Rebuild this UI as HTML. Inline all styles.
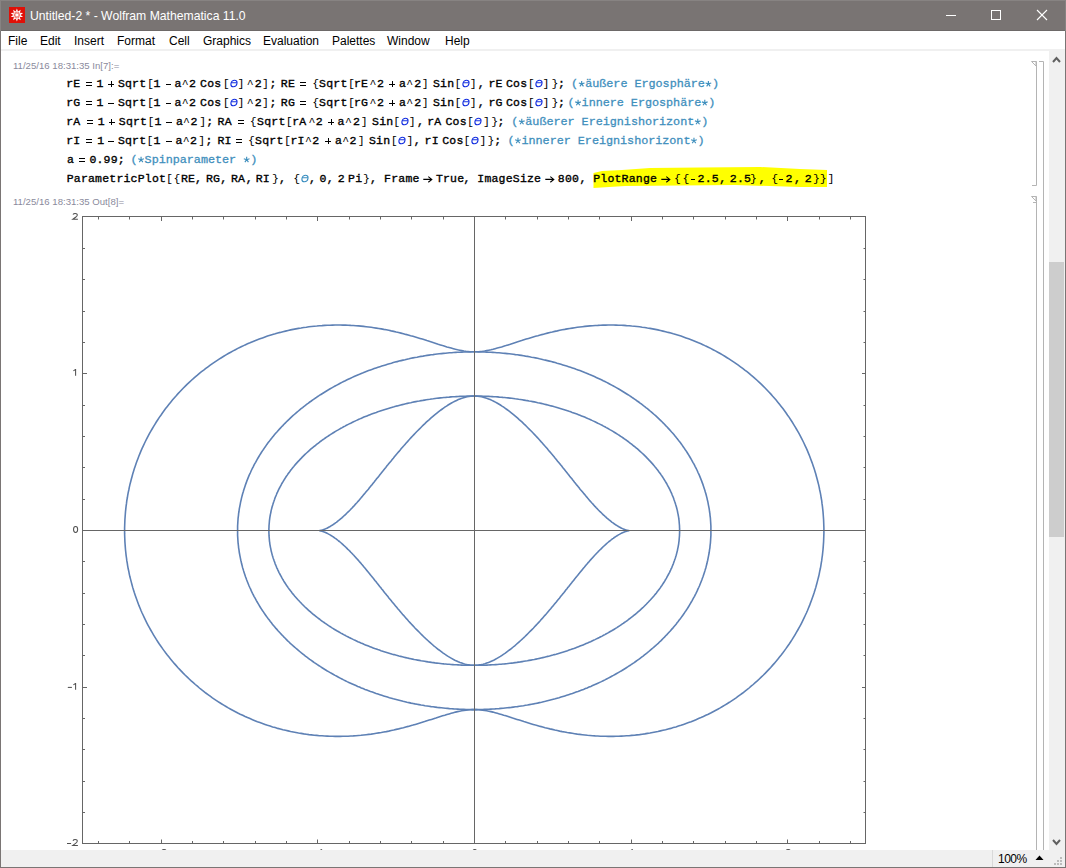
<!DOCTYPE html>
<html><head><meta charset="utf-8">
<style>
*{margin:0;padding:0;box-sizing:border-box}
html,body{width:1066px;height:868px;overflow:hidden;background:#fff;position:relative;font-family:"Liberation Sans",sans-serif}
.a{position:absolute;white-space:pre}
#title{left:0;top:0;width:1066px;height:31px;background:#797473}
#ttxt{left:30px;top:9px;font-size:12.2px;color:#fff;line-height:14px}
.menu{top:34px;font-size:12px;color:#000;line-height:14px}
.lbl{font-size:9.6px;color:#8a8a9c;line-height:10px}
b.op{position:absolute;height:1px;background:#000}
svg.th{position:absolute}
i.kt{position:absolute;white-space:pre;font-style:normal;line-height:14px;font-family:"Liberation Mono",monospace;font-size:11.5px;color:#000}
i.k,i.m,i.t,i.tl,i.ar{position:absolute;white-space:pre;font-style:normal;line-height:14px}
i.k{font-family:"Liberation Mono",monospace;font-size:11.5px;letter-spacing:0.2px;color:#000;-webkit-text-stroke:0.35px #000}
i.m{font-family:"Liberation Mono",monospace;font-size:11.8px;letter-spacing:-0.04px;color:#3f8fbd;-webkit-text-stroke:0.3px #3f8fbd}
i.t{font-family:"Liberation Sans",sans-serif;font-style:italic;font-size:11.5px;color:#2030d8}
i.tl{font-family:"Liberation Sans",sans-serif;font-style:italic;font-size:11.5px;color:#3c90c0}
i.ar{font-family:"Liberation Sans",sans-serif;font-size:11px;color:#000}
.code{font-family:"Liberation Mono",monospace;font-weight:bold;font-size:11px;color:#000;line-height:14px;letter-spacing:0px}
.cm{color:#4a98ba}
.th{color:#2a4fd0;font-style:italic}
.tick{font-size:9.5px;color:#444;line-height:10px}
</style></head><body>
<div id="title" class="a"></div>
<div class="a" style="left:0;top:0;width:1066px;height:1px;background:#878382"></div>
<div class="a" style="left:0;top:30px;width:1066px;height:1px;background:#6d6968"></div>
<div class="a" style="left:0;top:0;width:1px;height:31px;background:#878382"></div>
<div class="a" style="left:1065px;top:0;width:1px;height:31px;background:#878382"></div>
<svg class="a" style="left:9px;top:7px" width="16" height="16" viewBox="0 0 16 16">
<rect width="16" height="16" fill="#e01008"/>
<polygon fill="#fff" points="7.90,1.40 9.04,4.38 11.72,2.64 10.89,5.73 14.08,5.89 11.60,7.90 14.08,9.91 10.89,10.07 11.72,13.16 9.04,11.42 7.90,14.40 6.76,11.42 4.08,13.16 4.91,10.07 1.72,9.91 4.20,7.90 1.72,5.89 4.91,5.73 4.08,2.64 6.76,4.38"/>
<polygon fill="none" stroke="#ec6a5c" stroke-width="0.8" points="7.90,4.60 8.39,6.48 9.90,5.25 9.19,7.06 11.13,6.95 9.50,8.00 11.13,9.05 9.19,8.94 9.90,10.75 8.39,9.52 7.90,11.40 7.41,9.52 5.90,10.75 6.61,8.94 4.67,9.05 6.30,8.00 4.67,6.95 6.61,7.06 5.90,5.25 7.41,6.48"/>
</svg>
<div id="ttxt" class="a">Untitled-2 * - Wolfram Mathematica 11.0</div>
<svg class="a" style="left:940px;top:8px" width="120" height="16">
<line x1="6" y1="7.5" x2="16" y2="7.5" stroke="#fff" stroke-width="1"/>
<rect x="51.5" y="2.5" width="9" height="9" fill="none" stroke="#fff" stroke-width="1"/>
<line x1="97" y1="2" x2="107" y2="12" stroke="#fff" stroke-width="1.1"/>
<line x1="107" y1="2" x2="97" y2="12" stroke="#fff" stroke-width="1.1"/>
</svg>
<!-- window borders -->
<div class="a" style="left:0;top:31px;width:1px;height:837px;background:#7a7574"></div>
<div class="a" style="left:1065px;top:31px;width:1px;height:837px;background:#7a7574"></div>
<div class="a" style="left:0;top:867px;width:1066px;height:1px;background:#7a7574"></div>
<!-- menu -->
<div class="a menu" style="left:8px">File</div>
<div class="a menu" style="left:40px">Edit</div>
<div class="a menu" style="left:74px">Insert</div>
<div class="a menu" style="left:117px">Format</div>
<div class="a menu" style="left:169px">Cell</div>
<div class="a menu" style="left:203px">Graphics</div>
<div class="a menu" style="left:263px">Evaluation</div>
<div class="a menu" style="left:332px">Palettes</div>
<div class="a menu" style="left:387px">Window</div>
<div class="a menu" style="left:445px">Help</div>
<div class="a" style="left:1px;top:49px;width:1064px;height:2px;background:#f0f0f0"></div>
<!-- scrollbar -->
<div class="a" style="left:1049px;top:51px;width:16px;height:799px;background:#f0f0f0"></div>
<div class="a" style="left:1049px;top:262px;width:15px;height:275px;background:#cdcdcd"></div>
<svg class="a" style="left:1049px;top:51px" width="16" height="16"><polyline points="4,11 7.5,7 11,11" fill="none" stroke="#606060" stroke-width="2"/></svg>
<svg class="a" style="left:1049px;top:834px" width="16" height="16"><polyline points="4,6 7.5,10 11,6" fill="none" stroke="#606060" stroke-width="2"/></svg>
<!-- cell brackets -->
<svg class="a" style="left:1028px;top:55px" width="20" height="795">
<g stroke="#b4b4b4" stroke-width="1" fill="none">
<polyline points="4,6.5 8.5,6.5 8.5,130.5 4,130.5"/>
<polygon points="3.5,6.5 8,6.5 8,11" fill="#fff"/>
<polyline points="4,141.5 8.5,141.5 8.5,795"/>
<polygon points="3.5,141.5 8,141.5 8,146" fill="#fff"/>
<line x1="5" y1="147.5" x2="8.5" y2="147.5"/>
<polyline points="11,6.5 15.5,6.5 15.5,795"/>
</g></svg>
<!-- labels -->
<div class="a lbl" style="left:13px;top:61px">11/25/16 18:31:35 In[7]:=</div>
<div class="a lbl" style="left:13px;top:197px">11/25/16 18:31:35 Out[8]=</div>
<!-- code -->
<svg class="a" style="left:0;top:0" width="900" height="200"><polygon fill="#ffff00" points="593.5,173 602,171 622,170 650,168 700,167.5 760,167 800,169 827,170 827,187 800,187 735,185 625,186 593.5,188"/></svg>
<i class="k" style="left:66.2px;top:76.9px">rE</i>
<b class="op" style="left:85.9px;top:82.4px;width:6px"></b><b class="op" style="left:85.9px;top:85.4px;width:6px"></b>
<i class="k" style="left:96.4px;top:76.9px">1</i>
<b class="op" style="left:108.0px;top:84.1px;width:6px"></b><b class="op" style="left:110.5px;top:81.0px;width:1px;height:6px"></b>
<i class="k" style="left:117.9px;top:76.9px">Sqrt</i>
<i class="kt" style="left:146.9px;top:76.9px">[</i>
<i class="k" style="left:153.4px;top:76.9px">1</i>
<b class="op" style="left:165.5px;top:84.3px;width:5.7px"></b>
<i class="k" style="left:174.6px;top:76.9px">a</i>
<i class="kt" style="left:181.7px;top:76.9px">^</i>
<i class="k" style="left:189.1px;top:76.9px">2</i>
<i class="k" style="left:200.1px;top:76.9px">Cos</i>
<i class="kt" style="left:222.7px;top:76.9px">[</i>
<svg class="th" style="left:230.2px;top:79.0px" width="9" height="9"><g transform="skewX(-8)" fill="none" stroke="#1530e0" stroke-width="1.1"><ellipse cx="4.6" cy="4.5" rx="3" ry="3.2"/><line x1="1.8" y1="3.7" x2="7.4" y2="3.7"/></g></svg>
<i class="kt" style="left:237.6px;top:76.9px">]</i>
<i class="kt" style="left:246.8px;top:76.9px">^</i>
<i class="k" style="left:254.7px;top:76.9px">2</i>
<i class="kt" style="left:262.0px;top:76.9px">]</i>
<i class="k" style="left:269.4px;top:76.9px">;</i>
<i class="k" style="left:280.8px;top:76.9px">RE</i>
<b class="op" style="left:300.0px;top:82.4px;width:6px"></b><b class="op" style="left:300.0px;top:85.4px;width:6px"></b>
<i class="kt" style="left:312.3px;top:76.9px">{</i>
<i class="k" style="left:319.1px;top:76.9px">Sqrt</i>
<i class="kt" style="left:347.9px;top:76.9px">[</i>
<i class="k" style="left:353.9px;top:76.9px">rE</i>
<i class="kt" style="left:369.6px;top:76.9px">^</i>
<i class="k" style="left:377.1px;top:76.9px">2</i>
<b class="op" style="left:389.1px;top:84.1px;width:6px"></b><b class="op" style="left:391.6px;top:81.0px;width:1px;height:6px"></b>
<i class="k" style="left:398.9px;top:76.9px">a</i>
<i class="kt" style="left:406.3px;top:76.9px">^</i>
<i class="k" style="left:414.2px;top:76.9px">2</i>
<i class="kt" style="left:421.7px;top:76.9px">]</i>
<i class="k" style="left:433.0px;top:76.9px">Sin</i>
<i class="kt" style="left:454.4px;top:76.9px">[</i>
<svg class="th" style="left:461.9px;top:79.0px" width="9" height="9"><g transform="skewX(-8)" fill="none" stroke="#1530e0" stroke-width="1.1"><ellipse cx="4.6" cy="4.5" rx="3" ry="3.2"/><line x1="1.8" y1="3.7" x2="7.4" y2="3.7"/></g></svg>
<i class="kt" style="left:469.8px;top:76.9px">]</i>
<i class="k" style="left:477.8px;top:76.9px">,</i>
<i class="k" style="left:488.5px;top:76.9px">rE</i>
<i class="k" style="left:506.0px;top:76.9px">Cos</i>
<i class="kt" style="left:527.7px;top:76.9px">[</i>
<svg class="th" style="left:535.2px;top:79.0px" width="9" height="9"><g transform="skewX(-8)" fill="none" stroke="#1530e0" stroke-width="1.1"><ellipse cx="4.6" cy="4.5" rx="3" ry="3.2"/><line x1="1.8" y1="3.7" x2="7.4" y2="3.7"/></g></svg>
<i class="kt" style="left:542.6px;top:76.9px">]</i>
<i class="kt" style="left:551.6px;top:76.9px">}</i>
<i class="k" style="left:558.0px;top:76.9px">;</i>
<i class="m" style="left:571.1px;top:76.9px">(</i>
<svg class="th" style="left:0;top:0;overflow:visible" width="1" height="1"><path d="M581.67 83.90L581.67 80.90M581.67 83.90L584.52 82.97M581.67 83.90L583.43 86.33M581.67 83.90L579.91 86.33M581.67 83.90L578.82 82.97" stroke="#3f8fbd" stroke-width="1.15" fill="none"/></svg>
<i class="m" style="left:585.2px;top:76.9px">äußere Ergosphäre</i>
<svg class="th" style="left:0;top:0;overflow:visible" width="1" height="1"><path d="M708.39 83.90L708.39 80.90M708.39 83.90L711.24 82.97M708.39 83.90L710.15 86.33M708.39 83.90L706.63 86.33M708.39 83.90L705.54 82.97" stroke="#3f8fbd" stroke-width="1.15" fill="none"/></svg>
<i class="m" style="left:711.9px;top:76.9px">)</i>
<i class="k" style="left:66.2px;top:95.9px">rG</i>
<b class="op" style="left:85.9px;top:101.4px;width:6px"></b><b class="op" style="left:85.9px;top:104.4px;width:6px"></b>
<i class="k" style="left:96.4px;top:95.9px">1</i>
<b class="op" style="left:108.0px;top:103.2px;width:5.7px"></b>
<i class="k" style="left:117.9px;top:95.9px">Sqrt</i>
<i class="kt" style="left:146.9px;top:95.9px">[</i>
<i class="k" style="left:153.4px;top:95.9px">1</i>
<b class="op" style="left:165.5px;top:103.2px;width:5.7px"></b>
<i class="k" style="left:174.6px;top:95.9px">a</i>
<i class="kt" style="left:181.7px;top:95.9px">^</i>
<i class="k" style="left:189.1px;top:95.9px">2</i>
<i class="k" style="left:200.1px;top:95.9px">Cos</i>
<i class="kt" style="left:222.7px;top:95.9px">[</i>
<svg class="th" style="left:230.2px;top:98.0px" width="9" height="9"><g transform="skewX(-8)" fill="none" stroke="#1530e0" stroke-width="1.1"><ellipse cx="4.6" cy="4.5" rx="3" ry="3.2"/><line x1="1.8" y1="3.7" x2="7.4" y2="3.7"/></g></svg>
<i class="kt" style="left:237.6px;top:95.9px">]</i>
<i class="kt" style="left:246.8px;top:95.9px">^</i>
<i class="k" style="left:254.7px;top:95.9px">2</i>
<i class="kt" style="left:262.0px;top:95.9px">]</i>
<i class="k" style="left:269.4px;top:95.9px">;</i>
<i class="k" style="left:280.8px;top:95.9px">RG</i>
<b class="op" style="left:300.0px;top:101.4px;width:6px"></b><b class="op" style="left:300.0px;top:104.4px;width:6px"></b>
<i class="kt" style="left:312.3px;top:95.9px">{</i>
<i class="k" style="left:319.1px;top:95.9px">Sqrt</i>
<i class="kt" style="left:347.9px;top:95.9px">[</i>
<i class="k" style="left:353.9px;top:95.9px">rG</i>
<i class="kt" style="left:369.6px;top:95.9px">^</i>
<i class="k" style="left:377.1px;top:95.9px">2</i>
<b class="op" style="left:389.1px;top:103.0px;width:6px"></b><b class="op" style="left:391.6px;top:100.0px;width:1px;height:6px"></b>
<i class="k" style="left:398.9px;top:95.9px">a</i>
<i class="kt" style="left:406.3px;top:95.9px">^</i>
<i class="k" style="left:414.2px;top:95.9px">2</i>
<i class="kt" style="left:421.7px;top:95.9px">]</i>
<i class="k" style="left:433.0px;top:95.9px">Sin</i>
<i class="kt" style="left:454.4px;top:95.9px">[</i>
<svg class="th" style="left:461.9px;top:98.0px" width="9" height="9"><g transform="skewX(-8)" fill="none" stroke="#1530e0" stroke-width="1.1"><ellipse cx="4.6" cy="4.5" rx="3" ry="3.2"/><line x1="1.8" y1="3.7" x2="7.4" y2="3.7"/></g></svg>
<i class="kt" style="left:469.8px;top:95.9px">]</i>
<i class="k" style="left:477.8px;top:95.9px">,</i>
<i class="k" style="left:488.5px;top:95.9px">rG</i>
<i class="k" style="left:506.0px;top:95.9px">Cos</i>
<i class="kt" style="left:527.7px;top:95.9px">[</i>
<svg class="th" style="left:535.2px;top:98.0px" width="9" height="9"><g transform="skewX(-8)" fill="none" stroke="#1530e0" stroke-width="1.1"><ellipse cx="4.6" cy="4.5" rx="3" ry="3.2"/><line x1="1.8" y1="3.7" x2="7.4" y2="3.7"/></g></svg>
<i class="kt" style="left:542.6px;top:95.9px">]</i>
<i class="kt" style="left:551.6px;top:95.9px">}</i>
<i class="k" style="left:558.0px;top:95.9px">;</i>
<i class="m" style="left:567.5px;top:95.9px">(</i>
<svg class="th" style="left:0;top:0;overflow:visible" width="1" height="1"><path d="M578.07 102.85L578.07 99.85M578.07 102.85L580.92 101.92M578.07 102.85L579.83 105.28M578.07 102.85L576.31 105.28M578.07 102.85L575.22 101.92" stroke="#3f8fbd" stroke-width="1.15" fill="none"/></svg>
<i class="m" style="left:581.6px;top:95.9px">innere Ergosphäre</i>
<svg class="th" style="left:0;top:0;overflow:visible" width="1" height="1"><path d="M704.79 102.85L704.79 99.85M704.79 102.85L707.64 101.92M704.79 102.85L706.55 105.28M704.79 102.85L703.03 105.28M704.79 102.85L701.94 101.92" stroke="#3f8fbd" stroke-width="1.15" fill="none"/></svg>
<i class="m" style="left:708.3px;top:95.9px">)</i>
<i class="k" style="left:66.2px;top:114.8px">rA</i>
<b class="op" style="left:86.9px;top:120.3px;width:6px"></b><b class="op" style="left:86.9px;top:123.3px;width:6px"></b>
<i class="k" style="left:97.8px;top:114.8px">1</i>
<b class="op" style="left:108.9px;top:122.0px;width:6px"></b><b class="op" style="left:111.4px;top:118.9px;width:1px;height:6px"></b>
<i class="k" style="left:118.8px;top:114.8px">Sqrt</i>
<i class="kt" style="left:147.4px;top:114.8px">[</i>
<i class="k" style="left:154.4px;top:114.8px">1</i>
<b class="op" style="left:166.3px;top:122.2px;width:5.7px"></b>
<i class="k" style="left:176.0px;top:114.8px">a</i>
<i class="kt" style="left:183.1px;top:114.8px">^</i>
<i class="k" style="left:190.5px;top:114.8px">2</i>
<i class="kt" style="left:199.2px;top:114.8px">]</i>
<i class="k" style="left:206.2px;top:114.8px">;</i>
<i class="k" style="left:217.6px;top:114.8px">RA</i>
<b class="op" style="left:237.8px;top:120.3px;width:6px"></b><b class="op" style="left:237.8px;top:123.3px;width:6px"></b>
<i class="kt" style="left:249.7px;top:114.8px">{</i>
<i class="k" style="left:257.1px;top:114.8px">Sqrt</i>
<i class="kt" style="left:285.7px;top:114.8px">[</i>
<i class="k" style="left:292.2px;top:114.8px">rA</i>
<i class="kt" style="left:308.4px;top:114.8px">^</i>
<i class="k" style="left:315.8px;top:114.8px">2</i>
<b class="op" style="left:328.0px;top:122.0px;width:6px"></b><b class="op" style="left:330.5px;top:118.9px;width:1px;height:6px"></b>
<i class="k" style="left:337.6px;top:114.8px">a</i>
<i class="kt" style="left:345.1px;top:114.8px">^</i>
<i class="k" style="left:353.0px;top:114.8px">2</i>
<i class="kt" style="left:360.7px;top:114.8px">]</i>
<i class="k" style="left:372.1px;top:114.8px">Sin</i>
<i class="kt" style="left:393.2px;top:114.8px">[</i>
<svg class="th" style="left:401.1px;top:116.9px" width="9" height="9"><g transform="skewX(-8)" fill="none" stroke="#1530e0" stroke-width="1.1"><ellipse cx="4.6" cy="4.5" rx="3" ry="3.2"/><line x1="1.8" y1="3.7" x2="7.4" y2="3.7"/></g></svg>
<i class="kt" style="left:408.8px;top:114.8px">]</i>
<i class="k" style="left:417.0px;top:114.8px">,</i>
<i class="k" style="left:427.2px;top:114.8px">rA</i>
<i class="k" style="left:445.5px;top:114.8px">Cos</i>
<i class="kt" style="left:466.9px;top:114.8px">[</i>
<svg class="th" style="left:474.3px;top:116.9px" width="9" height="9"><g transform="skewX(-8)" fill="none" stroke="#1530e0" stroke-width="1.1"><ellipse cx="4.6" cy="4.5" rx="3" ry="3.2"/><line x1="1.8" y1="3.7" x2="7.4" y2="3.7"/></g></svg>
<i class="kt" style="left:482.9px;top:114.8px">]</i>
<i class="kt" style="left:491.3px;top:114.8px">}</i>
<i class="k" style="left:497.6px;top:114.8px">;</i>
<i class="m" style="left:511.2px;top:114.8px">(</i>
<svg class="th" style="left:0;top:0;overflow:visible" width="1" height="1"><path d="M521.77 121.80L521.77 118.80M521.77 121.80L524.62 120.87M521.77 121.80L523.53 124.23M521.77 121.80L520.01 124.23M521.77 121.80L518.92 120.87" stroke="#3f8fbd" stroke-width="1.15" fill="none"/></svg>
<i class="m" style="left:525.3px;top:114.8px">äußerer Ereignishorizont</i>
<svg class="th" style="left:0;top:0;overflow:visible" width="1" height="1"><path d="M697.77 121.80L697.77 118.80M697.77 121.80L700.62 120.87M697.77 121.80L699.53 124.23M697.77 121.80L696.01 124.23M697.77 121.80L694.92 120.87" stroke="#3f8fbd" stroke-width="1.15" fill="none"/></svg>
<i class="m" style="left:701.3px;top:114.8px">)</i>
<i class="k" style="left:66.2px;top:133.8px">rI</i>
<b class="op" style="left:86.2px;top:139.2px;width:6px"></b><b class="op" style="left:86.2px;top:142.2px;width:6px"></b>
<i class="k" style="left:97.2px;top:133.8px">1</i>
<b class="op" style="left:108.2px;top:141.2px;width:5.7px"></b>
<i class="k" style="left:117.9px;top:133.8px">Sqrt</i>
<i class="kt" style="left:146.4px;top:133.8px">[</i>
<i class="k" style="left:153.5px;top:133.8px">1</i>
<b class="op" style="left:166.0px;top:141.2px;width:5.7px"></b>
<i class="k" style="left:175.5px;top:133.8px">a</i>
<i class="kt" style="left:182.7px;top:133.8px">^</i>
<i class="k" style="left:190.0px;top:133.8px">2</i>
<i class="kt" style="left:198.3px;top:133.8px">]</i>
<i class="k" style="left:205.6px;top:133.8px">;</i>
<i class="k" style="left:217.4px;top:133.8px">RI</i>
<b class="op" style="left:236.4px;top:139.2px;width:6px"></b><b class="op" style="left:236.4px;top:142.2px;width:6px"></b>
<i class="kt" style="left:248.0px;top:133.8px">{</i>
<i class="k" style="left:255.1px;top:133.8px">Sqrt</i>
<i class="kt" style="left:284.0px;top:133.8px">[</i>
<i class="k" style="left:290.4px;top:133.8px">rI</i>
<i class="kt" style="left:305.1px;top:133.8px">^</i>
<i class="k" style="left:312.3px;top:133.8px">2</i>
<b class="op" style="left:325.0px;top:140.9px;width:6px"></b><b class="op" style="left:327.5px;top:137.8px;width:1px;height:6px"></b>
<i class="k" style="left:335.0px;top:133.8px">a</i>
<i class="kt" style="left:342.3px;top:133.8px">^</i>
<i class="k" style="left:349.5px;top:133.8px">2</i>
<i class="kt" style="left:357.8px;top:133.8px">]</i>
<i class="k" style="left:369.0px;top:133.8px">Sin</i>
<i class="kt" style="left:390.8px;top:133.8px">[</i>
<svg class="th" style="left:398.3px;top:135.8px" width="9" height="9"><g transform="skewX(-8)" fill="none" stroke="#1530e0" stroke-width="1.1"><ellipse cx="4.6" cy="4.5" rx="3" ry="3.2"/><line x1="1.8" y1="3.7" x2="7.4" y2="3.7"/></g></svg>
<i class="kt" style="left:406.5px;top:133.8px">]</i>
<i class="k" style="left:413.8px;top:133.8px">,</i>
<i class="k" style="left:424.6px;top:133.8px">rI</i>
<i class="k" style="left:442.2px;top:133.8px">Cos</i>
<i class="kt" style="left:463.6px;top:133.8px">[</i>
<svg class="th" style="left:471.1px;top:135.8px" width="9" height="9"><g transform="skewX(-8)" fill="none" stroke="#1530e0" stroke-width="1.1"><ellipse cx="4.6" cy="4.5" rx="3" ry="3.2"/><line x1="1.8" y1="3.7" x2="7.4" y2="3.7"/></g></svg>
<i class="kt" style="left:479.6px;top:133.8px">]</i>
<i class="kt" style="left:487.5px;top:133.8px">}</i>
<i class="k" style="left:494.3px;top:133.8px">;</i>
<i class="m" style="left:507.4px;top:133.8px">(</i>
<svg class="th" style="left:0;top:0;overflow:visible" width="1" height="1"><path d="M517.97 140.75L517.97 137.75M517.97 140.75L520.82 139.82M517.97 140.75L519.73 143.18M517.97 140.75L516.21 143.18M517.97 140.75L515.12 139.82" stroke="#3f8fbd" stroke-width="1.15" fill="none"/></svg>
<i class="m" style="left:521.5px;top:133.8px">innerer Ereignishorizont</i>
<svg class="th" style="left:0;top:0;overflow:visible" width="1" height="1"><path d="M693.97 140.75L693.97 137.75M693.97 140.75L696.82 139.82M693.97 140.75L695.73 143.18M693.97 140.75L692.21 143.18M693.97 140.75L691.12 139.82" stroke="#3f8fbd" stroke-width="1.15" fill="none"/></svg>
<i class="m" style="left:697.5px;top:133.8px">)</i>
<i class="k" style="left:66.9px;top:152.7px">a</i>
<b class="op" style="left:78.9px;top:158.2px;width:6px"></b><b class="op" style="left:78.9px;top:161.2px;width:6px"></b>
<i class="k" style="left:89.4px;top:152.7px">0.99;</i>
<i class="m" style="left:130.5px;top:152.7px">(</i>
<svg class="th" style="left:0;top:0;overflow:visible" width="1" height="1"><path d="M141.07 159.70L141.07 156.70M141.07 159.70L143.92 158.77M141.07 159.70L142.83 162.13M141.07 159.70L139.31 162.13M141.07 159.70L138.22 158.77" stroke="#3f8fbd" stroke-width="1.15" fill="none"/></svg>
<i class="m" style="left:144.6px;top:152.7px">Spinparameter </i>
<svg class="th" style="left:0;top:0;overflow:visible" width="1" height="1"><path d="M246.67 159.70L246.67 156.70M246.67 159.70L249.52 158.77M246.67 159.70L248.43 162.13M246.67 159.70L244.91 162.13M246.67 159.70L243.82 158.77" stroke="#3f8fbd" stroke-width="1.15" fill="none"/></svg>
<i class="m" style="left:250.2px;top:152.7px">)</i>
<i class="k" style="left:66.7px;top:171.7px">ParametricPlot</i>
<i class="kt" style="left:166.0px;top:171.7px">[</i>
<i class="kt" style="left:173.6px;top:171.7px">{</i>
<i class="k" style="left:181.0px;top:171.7px">RE</i>
<i class="k" style="left:194.9px;top:171.7px">,</i>
<i class="k" style="left:205.9px;top:171.7px">RG</i>
<i class="k" style="left:220.3px;top:171.7px">,</i>
<i class="k" style="left:230.9px;top:171.7px">RA</i>
<i class="k" style="left:245.7px;top:171.7px">,</i>
<i class="k" style="left:255.7px;top:171.7px">RI</i>
<i class="kt" style="left:272.1px;top:171.7px">}</i>
<i class="k" style="left:279.0px;top:171.7px">,</i>
<i class="kt" style="left:293.3px;top:171.7px">{</i>
<svg class="th" style="left:301.1px;top:173.8px" width="9" height="9"><g transform="skewX(-8)" fill="none" stroke="#3a8ec0" stroke-width="1.1"><ellipse cx="4.6" cy="4.5" rx="3" ry="3.2"/><line x1="1.8" y1="3.7" x2="7.4" y2="3.7"/></g></svg>
<i class="k" style="left:309.0px;top:171.7px">,</i>
<i class="k" style="left:319.6px;top:171.7px">0</i>
<i class="k" style="left:326.8px;top:171.7px">,</i>
<i class="k" style="left:337.8px;top:171.7px">2</i>
<i class="k" style="left:348.1px;top:171.7px">Pi</i>
<i class="kt" style="left:363.1px;top:171.7px">}</i>
<i class="k" style="left:370.0px;top:171.7px">,</i>
<i class="k" style="left:384.1px;top:171.7px">Frame</i>
<svg class="th" style="left:422.7px;top:175.9px" width="10" height="7"><path d="M0.3 3.4H8.8M5.3 0.6L8.8 3.4L5.3 6.2" fill="none" stroke="#000" stroke-width="1.1"/></svg>
<i class="k" style="left:435.9px;top:171.7px">True</i>
<i class="k" style="left:463.4px;top:171.7px">,</i>
<i class="k" style="left:477.3px;top:171.7px">ImageSize</i>
<svg class="th" style="left:545.0px;top:175.9px" width="10" height="7"><path d="M0.3 3.4H8.8M5.3 0.6L8.8 3.4L5.3 6.2" fill="none" stroke="#000" stroke-width="1.1"/></svg>
<i class="k" style="left:557.8px;top:171.7px">800</i>
<i class="k" style="left:579.4px;top:171.7px">,</i>
<i class="k" style="left:593.2px;top:171.7px">PlotRange</i>
<svg class="th" style="left:660.6px;top:175.9px" width="10" height="7"><path d="M0.3 3.4H8.8M5.3 0.6L8.8 3.4L5.3 6.2" fill="none" stroke="#000" stroke-width="1.1"/></svg>
<i class="kt" style="left:673.9px;top:171.7px">{</i>
<i class="kt" style="left:682.5px;top:171.7px">{</i>
<b class="op" style="left:691.1px;top:179.1px;width:4.3px"></b>
<i class="k" style="left:697.6px;top:171.7px">2.5</i>
<i class="k" style="left:719.3px;top:171.7px">,</i>
<i class="k" style="left:729.8px;top:171.7px">2.5</i>
<i class="kt" style="left:750.1px;top:171.7px">}</i>
<i class="k" style="left:758.7px;top:171.7px">,</i>
<i class="kt" style="left:771.3px;top:171.7px">{</i>
<b class="op" style="left:779.2px;top:179.1px;width:4.3px"></b>
<i class="k" style="left:785.6px;top:171.7px">2</i>
<i class="k" style="left:794.1px;top:171.7px">,</i>
<i class="k" style="left:804.7px;top:171.7px">2</i>
<i class="kt" style="left:813.1px;top:171.7px">}</i>
<i class="kt" style="left:819.7px;top:171.7px">}</i>
<i class="kt" style="left:827.6px;top:171.7px">]</i>
<!-- plot -->
<svg class="a" style="left:0;top:0" width="1066" height="850">
<g stroke="#5e81b5" stroke-width="1.6" fill="none"><path d="M474.2 351.8L476.3 351.8L478.4 351.7L480.5 351.5L482.5 351.3L484.6 351.0L486.7 350.6L488.8 350.2L490.9 349.8L493.0 349.3L495.1 348.7L497.3 348.1L499.4 347.5L501.6 346.9L503.7 346.2L505.9 345.6L508.1 344.9L510.3 344.2L512.6 343.4L514.8 342.7L517.0 342.0L519.3 341.3L521.6 340.6L523.9 339.8L526.2 339.1L528.5 338.4L530.8 337.7L533.2 337.0L535.5 336.3L537.9 335.7L540.3 335.0L542.7 334.4L545.1 333.7L547.5 333.1L549.9 332.5L552.3 332.0L554.8 331.4L557.3 330.9L559.7 330.3L562.2 329.8L564.7 329.4L567.2 328.9L569.7 328.5L572.2 328.1L574.7 327.7L577.3 327.3L579.8 327.0L582.4 326.7L584.9 326.4L587.5 326.1L590.0 325.9L592.6 325.7L595.2 325.5L597.8 325.4L600.4 325.2L603.0 325.1L605.6 325.1L608.2 325.0L610.8 325.0L613.4 325.0L616.0 325.1L618.6 325.2L621.2 325.3L623.9 325.4L626.5 325.6L629.1 325.7L631.7 326.0L634.3 326.2L637.0 326.5L639.6 326.8L642.2 327.2L644.8 327.5L647.4 328.0L650.0 328.4L652.6 328.9L655.3 329.4L657.9 329.9L660.4 330.5L663.0 331.1L665.6 331.7L668.2 332.4L670.8 333.0L673.3 333.8L675.9 334.5L678.4 335.3L681.0 336.1L683.5 337.0L686.0 337.9L688.6 338.8L691.1 339.7L693.6 340.7L696.0 341.7L698.5 342.8L701.0 343.8L703.4 344.9L705.8 346.1L708.3 347.2L710.7 348.4L713.1 349.7L715.4 350.9L717.8 352.2L720.2 353.5L722.5 354.9L724.8 356.3L727.1 357.7L729.4 359.1L731.6 360.6L733.9 362.1L736.1 363.6L738.3 365.2L740.5 366.8L742.7 368.4L744.8 370.1L747.0 371.7L749.1 373.4L751.1 375.2L753.2 376.9L755.2 378.7L757.3 380.5L759.3 382.4L761.2 384.2L763.2 386.1L765.1 388.0L767.0 390.0L768.9 392.0L770.7 393.9L772.5 396.0L774.3 398.0L776.1 400.1L777.8 402.2L779.5 404.3L781.2 406.4L782.9 408.6L784.5 410.8L786.1 413.0L787.6 415.2L789.2 417.4L790.7 419.7L792.2 422.0L793.6 424.3L795.0 426.6L796.4 429.0L797.8 431.4L799.1 433.7L800.4 436.1L801.7 438.6L802.9 441.0L804.1 443.5L805.2 445.9L806.4 448.4L807.5 450.9L808.5 453.4L809.6 456.0L810.5 458.5L811.5 461.1L812.4 463.6L813.3 466.2L814.2 468.8L815.0 471.4L815.8 474.0L816.5 476.7L817.2 479.3L817.9 482.0L818.6 484.6L819.2 487.3L819.7 490.0L820.3 492.6L820.8 495.3L821.2 498.0L821.7 500.7L822.0 503.4L822.4 506.1L822.7 508.9L823.0 511.6L823.2 514.3L823.4 517.0L823.6 519.8L823.7 522.5L823.8 525.2L823.9 528.0L823.9 530.7L823.9 533.4L823.8 536.2L823.7 538.9L823.6 541.6L823.4 544.4L823.2 547.1L823.0 549.8L822.7 552.5L822.4 555.3L822.0 558.0L821.7 560.7L821.2 563.4L820.8 566.1L820.3 568.8L819.7 571.4L819.2 574.1L818.6 576.8L817.9 579.4L817.2 582.1L816.5 584.7L815.8 587.4L815.0 590.0L814.2 592.6L813.3 595.2L812.4 597.8L811.5 600.3L810.5 602.9L809.6 605.4L808.5 608.0L807.5 610.5L806.4 613.0L805.2 615.5L804.1 617.9L802.9 620.4L801.7 622.8L800.4 625.3L799.1 627.7L797.8 630.0L796.4 632.4L795.0 634.8L793.6 637.1L792.2 639.4L790.7 641.7L789.2 644.0L787.6 646.2L786.1 648.4L784.5 650.6L782.9 652.8L781.2 655.0L779.5 657.1L777.8 659.2L776.1 661.3L774.3 663.4L772.5 665.4L770.7 667.5L768.9 669.4L767.0 671.4L765.1 673.4L763.2 675.3L761.2 677.2L759.3 679.0L757.3 680.9L755.2 682.7L753.2 684.5L751.1 686.2L749.1 688.0L747.0 689.7L744.8 691.3L742.7 693.0L740.5 694.6L738.3 696.2L736.1 697.8L733.9 699.3L731.6 700.8L729.4 702.3L727.1 703.7L724.8 705.1L722.5 706.5L720.2 707.9L717.8 709.2L715.4 710.5L713.1 711.7L710.7 713.0L708.3 714.2L705.8 715.3L703.4 716.5L701.0 717.6L698.5 718.6L696.0 719.7L693.6 720.7L691.1 721.7L688.6 722.6L686.0 723.5L683.5 724.4L681.0 725.3L678.4 726.1L675.9 726.9L673.3 727.6L670.8 728.4L668.2 729.0L665.6 729.7L663.0 730.3L660.4 730.9L657.9 731.5L655.3 732.0L652.6 732.5L650.0 733.0L647.4 733.4L644.8 733.9L642.2 734.2L639.6 734.6L637.0 734.9L634.3 735.2L631.7 735.4L629.1 735.7L626.5 735.8L623.9 736.0L621.2 736.1L618.6 736.2L616.0 736.3L613.4 736.4L610.8 736.4L608.2 736.4L605.6 736.3L603.0 736.3L600.4 736.2L597.8 736.0L595.2 735.9L592.6 735.7L590.0 735.5L587.5 735.3L584.9 735.0L582.4 734.7L579.8 734.4L577.3 734.1L574.7 733.7L572.2 733.3L569.7 732.9L567.2 732.5L564.7 732.0L562.2 731.6L559.7 731.1L557.3 730.5L554.8 730.0L552.3 729.4L549.9 728.9L547.5 728.3L545.1 727.7L542.7 727.0L540.3 726.4L537.9 725.7L535.5 725.1L533.2 724.4L530.8 723.7L528.5 723.0L526.2 722.3L523.9 721.6L521.6 720.8L519.3 720.1L517.0 719.4L514.8 718.7L512.6 718.0L510.3 717.2L508.1 716.5L505.9 715.8L503.7 715.2L501.6 714.5L499.4 713.9L497.3 713.3L495.1 712.7L493.0 712.1L490.9 711.6L488.8 711.2L486.7 710.8L484.6 710.4L482.5 710.1L480.5 709.9L478.4 709.7L476.3 709.6L474.3 709.6L472.2 709.6L470.1 709.7L468.0 709.9L466.0 710.1L463.9 710.4L461.8 710.8L459.7 711.2L457.6 711.6L455.5 712.1L453.4 712.7L451.2 713.3L449.1 713.9L446.9 714.5L444.8 715.2L442.6 715.8L440.4 716.5L438.2 717.2L435.9 718.0L433.7 718.7L431.5 719.4L429.2 720.1L426.9 720.8L424.6 721.6L422.3 722.3L420.0 723.0L417.7 723.7L415.3 724.4L413.0 725.1L410.6 725.7L408.2 726.4L405.8 727.0L403.4 727.7L401.0 728.3L398.6 728.9L396.2 729.4L393.7 730.0L391.2 730.5L388.8 731.1L386.3 731.6L383.8 732.0L381.3 732.5L378.8 732.9L376.3 733.3L373.8 733.7L371.2 734.1L368.7 734.4L366.1 734.7L363.6 735.0L361.0 735.3L358.5 735.5L355.9 735.7L353.3 735.9L350.7 736.0L348.1 736.2L345.5 736.3L342.9 736.3L340.3 736.4L337.7 736.4L335.1 736.4L332.5 736.3L329.9 736.2L327.3 736.1L324.6 736.0L322.0 735.8L319.4 735.7L316.8 735.4L314.2 735.2L311.5 734.9L308.9 734.6L306.3 734.2L303.7 733.9L301.1 733.4L298.5 733.0L295.9 732.5L293.2 732.0L290.6 731.5L288.1 730.9L285.5 730.3L282.9 729.7L280.3 729.0L277.7 728.4L275.2 727.6L272.6 726.9L270.1 726.1L267.5 725.3L265.0 724.4L262.5 723.5L259.9 722.6L257.4 721.7L254.9 720.7L252.5 719.7L250.0 718.6L247.5 717.6L245.1 716.5L242.7 715.3L240.2 714.2L237.8 713.0L235.4 711.7L233.1 710.5L230.7 709.2L228.3 707.9L226.0 706.5L223.7 705.1L221.4 703.7L219.1 702.3L216.9 700.8L214.6 699.3L212.4 697.8L210.2 696.2L208.0 694.6L205.8 693.0L203.7 691.3L201.5 689.7L199.4 688.0L197.4 686.2L195.3 684.5L193.3 682.7L191.2 680.9L189.2 679.0L187.3 677.2L185.3 675.3L183.4 673.4L181.5 671.4L179.6 669.4L177.8 667.5L176.0 665.4L174.2 663.4L172.4 661.3L170.7 659.2L169.0 657.1L167.3 655.0L165.6 652.8L164.0 650.6L162.4 648.4L160.9 646.2L159.3 644.0L157.8 641.7L156.3 639.4L154.9 637.1L153.5 634.8L152.1 632.4L150.7 630.0L149.4 627.7L148.1 625.3L146.8 622.8L145.6 620.4L144.4 617.9L143.3 615.5L142.1 613.0L141.0 610.5L140.0 608.0L138.9 605.4L138.0 602.9L137.0 600.3L136.1 597.8L135.2 595.2L134.3 592.6L133.5 590.0L132.7 587.4L132.0 584.7L131.3 582.1L130.6 579.4L129.9 576.8L129.3 574.1L128.8 571.4L128.2 568.8L127.7 566.1L127.3 563.4L126.8 560.7L126.5 558.0L126.1 555.3L125.8 552.5L125.5 549.8L125.3 547.1L125.1 544.4L124.9 541.6L124.8 538.9L124.7 536.2L124.6 533.4L124.6 530.7L124.6 528.0L124.7 525.2L124.8 522.5L124.9 519.8L125.1 517.0L125.3 514.3L125.5 511.6L125.8 508.9L126.1 506.1L126.5 503.4L126.8 500.7L127.3 498.0L127.7 495.3L128.2 492.6L128.8 490.0L129.3 487.3L129.9 484.6L130.6 482.0L131.3 479.3L132.0 476.7L132.7 474.0L133.5 471.4L134.3 468.8L135.2 466.2L136.1 463.6L137.0 461.1L138.0 458.5L138.9 456.0L140.0 453.4L141.0 450.9L142.1 448.4L143.3 445.9L144.4 443.5L145.6 441.0L146.8 438.6L148.1 436.1L149.4 433.7L150.7 431.4L152.1 429.0L153.5 426.6L154.9 424.3L156.3 422.0L157.8 419.7L159.3 417.4L160.9 415.2L162.4 413.0L164.0 410.8L165.6 408.6L167.3 406.4L169.0 404.3L170.7 402.2L172.4 400.1L174.2 398.0L176.0 396.0L177.8 393.9L179.6 392.0L181.5 390.0L183.4 388.0L185.3 386.1L187.3 384.2L189.2 382.4L191.2 380.5L193.3 378.7L195.3 376.9L197.4 375.2L199.4 373.4L201.5 371.7L203.7 370.1L205.8 368.4L208.0 366.8L210.2 365.2L212.4 363.6L214.6 362.1L216.9 360.6L219.1 359.1L221.4 357.7L223.7 356.3L226.0 354.9L228.3 353.5L230.7 352.2L233.1 350.9L235.4 349.7L237.8 348.4L240.2 347.2L242.7 346.1L245.1 344.9L247.5 343.8L250.0 342.8L252.5 341.7L254.9 340.7L257.4 339.7L259.9 338.8L262.5 337.9L265.0 337.0L267.5 336.1L270.1 335.3L272.6 334.5L275.2 333.8L277.7 333.0L280.3 332.4L282.9 331.7L285.5 331.1L288.1 330.5L290.6 329.9L293.2 329.4L295.9 328.9L298.5 328.4L301.1 328.0L303.7 327.5L306.3 327.2L308.9 326.8L311.5 326.5L314.2 326.2L316.8 326.0L319.4 325.7L322.0 325.6L324.6 325.4L327.3 325.3L329.9 325.2L332.5 325.1L335.1 325.0L337.7 325.0L340.3 325.0L342.9 325.1L345.5 325.1L348.1 325.2L350.7 325.4L353.3 325.5L355.9 325.7L358.5 325.9L361.0 326.1L363.6 326.4L366.1 326.7L368.7 327.0L371.2 327.3L373.8 327.7L376.3 328.1L378.8 328.5L381.3 328.9L383.8 329.4L386.3 329.8L388.8 330.3L391.2 330.9L393.7 331.4L396.2 332.0L398.6 332.5L401.0 333.1L403.4 333.7L405.8 334.4L408.2 335.0L410.6 335.7L413.0 336.3L415.3 337.0L417.7 337.7L420.0 338.4L422.3 339.1L424.6 339.8L426.9 340.6L429.2 341.3L431.5 342.0L433.7 342.7L435.9 343.4L438.2 344.2L440.4 344.9L442.6 345.6L444.8 346.2L446.9 346.9L449.1 347.5L451.2 348.1L453.4 348.7L455.5 349.3L457.6 349.8L459.7 350.2L461.8 350.6L463.9 351.0L466.0 351.3L468.0 351.5L470.1 351.7L472.2 351.8Z"/>
<path d="M474.2 396.1L476.0 396.1L477.8 396.2L479.6 396.5L481.4 396.8L483.2 397.2L484.9 397.7L486.7 398.3L488.5 398.9L490.2 399.6L491.9 400.4L493.7 401.2L495.4 402.1L497.0 403.0L498.7 404.0L500.4 405.0L502.0 406.1L503.7 407.2L505.3 408.3L506.9 409.5L508.5 410.7L510.1 411.9L511.6 413.1L513.2 414.4L514.7 415.6L516.2 416.9L517.7 418.2L519.2 419.6L520.7 420.9L522.2 422.2L523.6 423.6L525.0 424.9L526.4 426.3L527.8 427.7L529.2 429.1L530.6 430.5L531.9 431.8L533.3 433.2L534.6 434.6L535.9 436.0L537.2 437.4L538.5 438.8L539.8 440.2L541.0 441.6L542.3 443.0L543.5 444.4L544.7 445.8L546.0 447.2L547.2 448.6L548.3 450.0L549.5 451.4L550.7 452.7L551.8 454.1L553.0 455.5L554.1 456.8L555.2 458.2L556.3 459.5L557.4 460.9L558.5 462.2L559.6 463.5L560.6 464.8L561.7 466.1L562.7 467.4L563.8 468.7L564.8 470.0L565.8 471.3L566.8 472.5L567.8 473.8L568.8 475.0L569.7 476.2L570.7 477.4L571.7 478.6L572.6 479.8L573.6 481.0L574.5 482.2L575.4 483.3L576.3 484.5L577.3 485.6L578.2 486.7L579.1 487.8L579.9 488.9L580.8 490.0L581.7 491.0L582.6 492.1L583.4 493.1L584.3 494.1L585.1 495.1L585.9 496.1L586.8 497.1L587.6 498.1L588.4 499.0L589.2 499.9L590.0 500.9L590.8 501.8L591.6 502.7L592.4 503.5L593.2 504.4L593.9 505.2L594.7 506.1L595.5 506.9L596.2 507.7L596.9 508.4L597.7 509.2L598.4 510.0L599.1 510.7L599.8 511.4L600.6 512.1L601.3 512.8L602.0 513.5L602.6 514.2L603.3 514.8L604.0 515.4L604.7 516.0L605.3 516.6L606.0 517.2L606.6 517.8L607.3 518.4L607.9 518.9L608.5 519.4L609.1 519.9L609.8 520.4L610.4 520.9L611.0 521.4L611.5 521.8L612.1 522.3L612.7 522.7L613.3 523.1L613.8 523.5L614.4 523.9L614.9 524.3L615.4 524.6L616.0 525.0L616.5 525.3L617.0 525.6L617.5 525.9L618.0 526.2L618.4 526.5L618.9 526.8L619.4 527.0L619.8 527.3L620.3 527.5L620.7 527.8L621.1 528.0L621.5 528.2L621.9 528.4L622.3 528.6L622.7 528.7L623.1 528.9L623.5 529.1L623.8 529.2L624.2 529.3L624.5 529.5L624.8 529.6L625.1 529.7L625.4 529.8L625.7 529.9L626.0 530.0L626.3 530.1L626.5 530.2L626.8 530.2L627.0 530.3L627.3 530.4L627.5 530.4L627.7 530.5L627.9 530.5L628.0 530.5L628.2 530.6L628.4 530.6L628.5 530.6L628.7 530.6L628.8 530.6L628.9 530.7L629.0 530.7L629.1 530.7L629.2 530.7L629.2 530.7L629.3 530.7L629.3 530.7L629.3 530.7L629.4 530.7L629.4 530.7L629.4 530.7L629.3 530.7L629.3 530.7L629.3 530.7L629.2 530.7L629.2 530.7L629.1 530.7L629.0 530.7L628.9 530.7L628.8 530.8L628.7 530.8L628.5 530.8L628.4 530.8L628.2 530.8L628.0 530.9L627.9 530.9L627.7 530.9L627.5 531.0L627.3 531.0L627.0 531.1L626.8 531.2L626.5 531.2L626.3 531.3L626.0 531.4L625.7 531.5L625.4 531.6L625.1 531.7L624.8 531.8L624.5 531.9L624.2 532.1L623.8 532.2L623.5 532.3L623.1 532.5L622.7 532.7L622.3 532.8L621.9 533.0L621.5 533.2L621.1 533.4L620.7 533.6L620.3 533.9L619.8 534.1L619.4 534.4L618.9 534.6L618.4 534.9L618.0 535.2L617.5 535.5L617.0 535.8L616.5 536.1L616.0 536.4L615.4 536.8L614.9 537.1L614.4 537.5L613.8 537.9L613.3 538.3L612.7 538.7L612.1 539.1L611.5 539.6L611.0 540.0L610.4 540.5L609.8 541.0L609.1 541.5L608.5 542.0L607.9 542.5L607.3 543.0L606.6 543.6L606.0 544.2L605.3 544.8L604.7 545.4L604.0 546.0L603.3 546.6L602.6 547.2L602.0 547.9L601.3 548.6L600.6 549.3L599.8 550.0L599.1 550.7L598.4 551.4L597.7 552.2L596.9 553.0L596.2 553.7L595.5 554.5L594.7 555.3L593.9 556.2L593.2 557.0L592.4 557.9L591.6 558.7L590.8 559.6L590.0 560.5L589.2 561.5L588.4 562.4L587.6 563.3L586.8 564.3L585.9 565.3L585.1 566.3L584.3 567.3L583.4 568.3L582.6 569.3L581.7 570.4L580.8 571.4L579.9 572.5L579.1 573.6L578.2 574.7L577.3 575.8L576.3 576.9L575.4 578.1L574.5 579.2L573.6 580.4L572.6 581.6L571.7 582.8L570.7 584.0L569.7 585.2L568.8 586.4L567.8 587.6L566.8 588.9L565.8 590.1L564.8 591.4L563.8 592.7L562.7 594.0L561.7 595.3L560.6 596.6L559.6 597.9L558.5 599.2L557.4 600.5L556.3 601.9L555.2 603.2L554.1 604.6L553.0 605.9L551.8 607.3L550.7 608.7L549.5 610.0L548.3 611.4L547.2 612.8L546.0 614.2L544.7 615.6L543.5 617.0L542.3 618.4L541.0 619.8L539.8 621.2L538.5 622.6L537.2 624.0L535.9 625.4L534.6 626.8L533.3 628.2L531.9 629.6L530.6 630.9L529.2 632.3L527.8 633.7L526.4 635.1L525.0 636.5L523.6 637.8L522.2 639.2L520.7 640.5L519.2 641.8L517.7 643.2L516.2 644.5L514.7 645.8L513.2 647.0L511.6 648.3L510.1 649.5L508.5 650.7L506.9 651.9L505.3 653.1L503.7 654.2L502.0 655.3L500.4 656.4L498.7 657.4L497.0 658.4L495.4 659.3L493.7 660.2L491.9 661.0L490.2 661.8L488.5 662.5L486.7 663.1L484.9 663.7L483.2 664.2L481.4 664.6L479.6 664.9L477.8 665.2L476.0 665.3L474.2 665.3L472.5 665.3L470.7 665.2L468.9 664.9L467.1 664.6L465.3 664.2L463.6 663.7L461.8 663.1L460.0 662.5L458.3 661.8L456.6 661.0L454.8 660.2L453.1 659.3L451.5 658.4L449.8 657.4L448.1 656.4L446.5 655.3L444.8 654.2L443.2 653.1L441.6 651.9L440.0 650.7L438.4 649.5L436.9 648.3L435.3 647.0L433.8 645.8L432.3 644.5L430.8 643.2L429.3 641.8L427.8 640.5L426.3 639.2L424.9 637.8L423.5 636.5L422.1 635.1L420.7 633.7L419.3 632.3L417.9 630.9L416.6 629.6L415.2 628.2L413.9 626.8L412.6 625.4L411.3 624.0L410.0 622.6L408.7 621.2L407.5 619.8L406.2 618.4L405.0 617.0L403.8 615.6L402.5 614.2L401.3 612.8L400.2 611.4L399.0 610.0L397.8 608.7L396.7 607.3L395.5 605.9L394.4 604.6L393.3 603.2L392.2 601.9L391.1 600.5L390.0 599.2L388.9 597.9L387.9 596.6L386.8 595.3L385.8 594.0L384.7 592.7L383.7 591.4L382.7 590.1L381.7 588.9L380.7 587.6L379.7 586.4L378.8 585.2L377.8 584.0L376.8 582.8L375.9 581.6L374.9 580.4L374.0 579.2L373.1 578.1L372.2 576.9L371.2 575.8L370.3 574.7L369.4 573.6L368.6 572.5L367.7 571.4L366.8 570.4L365.9 569.3L365.1 568.3L364.2 567.3L363.4 566.3L362.6 565.3L361.7 564.3L360.9 563.3L360.1 562.4L359.3 561.5L358.5 560.5L357.7 559.6L356.9 558.7L356.1 557.9L355.3 557.0L354.6 556.2L353.8 555.3L353.0 554.5L352.3 553.7L351.6 553.0L350.8 552.2L350.1 551.4L349.4 550.7L348.7 550.0L347.9 549.3L347.2 548.6L346.5 547.9L345.9 547.2L345.2 546.6L344.5 546.0L343.8 545.4L343.2 544.8L342.5 544.2L341.9 543.6L341.2 543.0L340.6 542.5L340.0 542.0L339.4 541.5L338.7 541.0L338.1 540.5L337.5 540.0L337.0 539.6L336.4 539.1L335.8 538.7L335.2 538.3L334.7 537.9L334.1 537.5L333.6 537.1L333.1 536.8L332.5 536.4L332.0 536.1L331.5 535.8L331.0 535.5L330.5 535.2L330.1 534.9L329.6 534.6L329.1 534.4L328.7 534.1L328.2 533.9L327.8 533.6L327.4 533.4L327.0 533.2L326.6 533.0L326.2 532.8L325.8 532.7L325.4 532.5L325.0 532.3L324.7 532.2L324.3 532.1L324.0 531.9L323.7 531.8L323.4 531.7L323.1 531.6L322.8 531.5L322.5 531.4L322.2 531.3L322.0 531.2L321.7 531.2L321.5 531.1L321.2 531.0L321.0 531.0L320.8 530.9L320.6 530.9L320.5 530.9L320.3 530.8L320.1 530.8L320.0 530.8L319.8 530.8L319.7 530.8L319.6 530.7L319.5 530.7L319.4 530.7L319.3 530.7L319.3 530.7L319.2 530.7L319.2 530.7L319.2 530.7L319.1 530.7L319.1 530.7L319.1 530.7L319.2 530.7L319.2 530.7L319.2 530.7L319.3 530.7L319.3 530.7L319.4 530.7L319.5 530.7L319.6 530.7L319.7 530.6L319.8 530.6L320.0 530.6L320.1 530.6L320.3 530.6L320.5 530.5L320.6 530.5L320.8 530.5L321.0 530.4L321.2 530.4L321.5 530.3L321.7 530.2L322.0 530.2L322.2 530.1L322.5 530.0L322.8 529.9L323.1 529.8L323.4 529.7L323.7 529.6L324.0 529.5L324.3 529.3L324.7 529.2L325.0 529.1L325.4 528.9L325.8 528.7L326.2 528.6L326.6 528.4L327.0 528.2L327.4 528.0L327.8 527.8L328.2 527.5L328.7 527.3L329.1 527.0L329.6 526.8L330.1 526.5L330.5 526.2L331.0 525.9L331.5 525.6L332.0 525.3L332.5 525.0L333.1 524.6L333.6 524.3L334.1 523.9L334.7 523.5L335.2 523.1L335.8 522.7L336.4 522.3L337.0 521.8L337.5 521.4L338.1 520.9L338.7 520.4L339.4 519.9L340.0 519.4L340.6 518.9L341.2 518.4L341.9 517.8L342.5 517.2L343.2 516.6L343.8 516.0L344.5 515.4L345.2 514.8L345.9 514.2L346.5 513.5L347.2 512.8L347.9 512.1L348.7 511.4L349.4 510.7L350.1 510.0L350.8 509.2L351.6 508.4L352.3 507.7L353.0 506.9L353.8 506.1L354.6 505.2L355.3 504.4L356.1 503.5L356.9 502.7L357.7 501.8L358.5 500.9L359.3 499.9L360.1 499.0L360.9 498.1L361.7 497.1L362.6 496.1L363.4 495.1L364.2 494.1L365.1 493.1L365.9 492.1L366.8 491.0L367.7 490.0L368.6 488.9L369.4 487.8L370.3 486.7L371.2 485.6L372.2 484.5L373.1 483.3L374.0 482.2L374.9 481.0L375.9 479.8L376.8 478.6L377.8 477.4L378.8 476.2L379.7 475.0L380.7 473.8L381.7 472.5L382.7 471.3L383.7 470.0L384.7 468.7L385.8 467.4L386.8 466.1L387.9 464.8L388.9 463.5L390.0 462.2L391.1 460.9L392.2 459.5L393.3 458.2L394.4 456.8L395.5 455.5L396.7 454.1L397.8 452.7L399.0 451.4L400.2 450.0L401.3 448.6L402.5 447.2L403.8 445.8L405.0 444.4L406.2 443.0L407.5 441.6L408.7 440.2L410.0 438.8L411.3 437.4L412.6 436.0L413.9 434.6L415.2 433.2L416.6 431.8L417.9 430.5L419.3 429.1L420.7 427.7L422.1 426.3L423.5 424.9L424.9 423.6L426.3 422.2L427.8 420.9L429.3 419.6L430.8 418.2L432.3 416.9L433.8 415.6L435.3 414.4L436.9 413.1L438.4 411.9L440.0 410.7L441.6 409.5L443.2 408.3L444.8 407.2L446.5 406.1L448.1 405.0L449.8 404.0L451.5 403.0L453.1 402.1L454.8 401.2L456.6 400.4L458.3 399.6L460.0 398.9L461.8 398.3L463.6 397.7L465.3 397.2L467.1 396.8L468.9 396.5L470.7 396.2L472.5 396.1Z"/>
<path d="M474.2 351.8L476.3 351.8L478.4 351.9L480.4 351.9L482.5 351.9L484.6 352.0L486.6 352.1L488.7 352.2L490.8 352.3L492.8 352.4L494.9 352.5L496.9 352.7L499.0 352.8L501.0 353.0L503.1 353.2L505.1 353.4L507.2 353.6L509.2 353.8L511.3 354.0L513.3 354.3L515.4 354.6L517.4 354.8L519.4 355.1L521.4 355.4L523.5 355.7L525.5 356.1L527.5 356.4L529.5 356.8L531.5 357.2L533.5 357.5L535.5 357.9L537.5 358.3L539.5 358.8L541.5 359.2L543.5 359.7L545.4 360.1L547.4 360.6L549.4 361.1L551.3 361.6L553.3 362.1L555.2 362.6L557.1 363.2L559.1 363.7L561.0 364.3L562.9 364.9L564.8 365.5L566.7 366.1L568.6 366.7L570.5 367.3L572.4 367.9L574.3 368.6L576.1 369.3L578.0 369.9L579.9 370.6L581.7 371.3L583.5 372.0L585.4 372.8L587.2 373.5L589.0 374.3L590.8 375.0L592.6 375.8L594.4 376.6L596.2 377.4L597.9 378.2L599.7 379.0L601.4 379.8L603.2 380.7L604.9 381.5L606.6 382.4L608.3 383.3L610.0 384.2L611.7 385.1L613.4 386.0L615.0 386.9L616.7 387.9L618.3 388.8L620.0 389.8L621.6 390.7L623.2 391.7L624.8 392.7L626.4 393.7L628.0 394.7L629.5 395.7L631.1 396.7L632.6 397.8L634.2 398.8L635.7 399.9L637.2 401.0L638.7 402.0L640.1 403.1L641.6 404.2L643.1 405.3L644.5 406.5L645.9 407.6L647.4 408.7L648.8 409.9L650.1 411.0L651.5 412.2L652.9 413.4L654.2 414.5L655.6 415.7L656.9 416.9L658.2 418.1L659.5 419.4L660.8 420.6L662.0 421.8L663.3 423.1L664.5 424.3L665.7 425.6L666.9 426.8L668.1 428.1L669.3 429.4L670.5 430.7L671.6 432.0L672.8 433.3L673.9 434.6L675.0 435.9L676.1 437.2L677.1 438.6L678.2 439.9L679.2 441.3L680.3 442.6L681.3 444.0L682.3 445.4L683.2 446.7L684.2 448.1L685.1 449.5L686.1 450.9L687.0 452.3L687.9 453.7L688.8 455.1L689.6 456.5L690.5 458.0L691.3 459.4L692.1 460.8L692.9 462.3L693.7 463.7L694.5 465.1L695.2 466.6L696.0 468.1L696.7 469.5L697.4 471.0L698.0 472.5L698.7 473.9L699.4 475.4L700.0 476.9L700.6 478.4L701.2 479.9L701.8 481.4L702.3 482.9L702.9 484.4L703.4 485.9L703.9 487.4L704.4 488.9L704.9 490.5L705.3 492.0L705.8 493.5L706.2 495.0L706.6 496.6L707.0 498.1L707.3 499.6L707.7 501.2L708.0 502.7L708.3 504.3L708.6 505.8L708.9 507.4L709.2 508.9L709.4 510.5L709.6 512.0L709.9 513.6L710.0 515.1L710.2 516.7L710.4 518.2L710.5 519.8L710.6 521.3L710.7 522.9L710.8 524.5L710.9 526.0L710.9 527.6L710.9 529.1L710.9 530.7L710.9 532.3L710.9 533.8L710.9 535.4L710.8 536.9L710.7 538.5L710.6 540.1L710.5 541.6L710.4 543.2L710.2 544.7L710.0 546.3L709.9 547.8L709.6 549.4L709.4 550.9L709.2 552.5L708.9 554.0L708.6 555.6L708.3 557.1L708.0 558.7L707.7 560.2L707.3 561.8L707.0 563.3L706.6 564.8L706.2 566.4L705.8 567.9L705.3 569.4L704.9 570.9L704.4 572.5L703.9 574.0L703.4 575.5L702.9 577.0L702.3 578.5L701.8 580.0L701.2 581.5L700.6 583.0L700.0 584.5L699.4 586.0L698.7 587.5L698.0 588.9L697.4 590.4L696.7 591.9L696.0 593.3L695.2 594.8L694.5 596.3L693.7 597.7L692.9 599.1L692.1 600.6L691.3 602.0L690.5 603.4L689.6 604.9L688.8 606.3L687.9 607.7L687.0 609.1L686.1 610.5L685.1 611.9L684.2 613.3L683.2 614.7L682.3 616.0L681.3 617.4L680.3 618.8L679.2 620.1L678.2 621.5L677.1 622.8L676.1 624.2L675.0 625.5L673.9 626.8L672.8 628.1L671.6 629.4L670.5 630.7L669.3 632.0L668.1 633.3L666.9 634.6L665.7 635.8L664.5 637.1L663.3 638.3L662.0 639.6L660.8 640.8L659.5 642.0L658.2 643.3L656.9 644.5L655.6 645.7L654.2 646.9L652.9 648.0L651.5 649.2L650.1 650.4L648.8 651.5L647.4 652.7L645.9 653.8L644.5 654.9L643.1 656.1L641.6 657.2L640.1 658.3L638.7 659.4L637.2 660.4L635.7 661.5L634.2 662.6L632.6 663.6L631.1 664.7L629.5 665.7L628.0 666.7L626.4 667.7L624.8 668.7L623.2 669.7L621.6 670.7L620.0 671.6L618.3 672.6L616.7 673.5L615.0 674.5L613.4 675.4L611.7 676.3L610.0 677.2L608.3 678.1L606.6 679.0L604.9 679.9L603.2 680.7L601.4 681.6L599.7 682.4L597.9 683.2L596.2 684.0L594.4 684.8L592.6 685.6L590.8 686.4L589.0 687.1L587.2 687.9L585.4 688.6L583.5 689.4L581.7 690.1L579.9 690.8L578.0 691.5L576.1 692.1L574.3 692.8L572.4 693.5L570.5 694.1L568.6 694.7L566.7 695.3L564.8 695.9L562.9 696.5L561.0 697.1L559.1 697.7L557.1 698.2L555.2 698.8L553.3 699.3L551.3 699.8L549.4 700.3L547.4 700.8L545.4 701.3L543.5 701.7L541.5 702.2L539.5 702.6L537.5 703.1L535.5 703.5L533.5 703.9L531.5 704.2L529.5 704.6L527.5 705.0L525.5 705.3L523.5 705.7L521.4 706.0L519.4 706.3L517.4 706.6L515.4 706.8L513.3 707.1L511.3 707.4L509.2 707.6L507.2 707.8L505.1 708.0L503.1 708.2L501.0 708.4L499.0 708.6L496.9 708.7L494.9 708.9L492.8 709.0L490.8 709.1L488.7 709.2L486.6 709.3L484.6 709.4L482.5 709.5L480.4 709.5L478.4 709.5L476.3 709.6L474.3 709.6L472.2 709.6L470.1 709.5L468.1 709.5L466.0 709.5L463.9 709.4L461.9 709.3L459.8 709.2L457.7 709.1L455.7 709.0L453.6 708.9L451.6 708.7L449.5 708.6L447.5 708.4L445.4 708.2L443.4 708.0L441.3 707.8L439.3 707.6L437.2 707.4L435.2 707.1L433.1 706.8L431.1 706.6L429.1 706.3L427.1 706.0L425.0 705.7L423.0 705.3L421.0 705.0L419.0 704.6L417.0 704.2L415.0 703.9L413.0 703.5L411.0 703.1L409.0 702.6L407.0 702.2L405.0 701.7L403.1 701.3L401.1 700.8L399.1 700.3L397.2 699.8L395.2 699.3L393.3 698.8L391.4 698.2L389.4 697.7L387.5 697.1L385.6 696.5L383.7 695.9L381.8 695.3L379.9 694.7L378.0 694.1L376.1 693.5L374.2 692.8L372.4 692.1L370.5 691.5L368.6 690.8L366.8 690.1L365.0 689.4L363.1 688.6L361.3 687.9L359.5 687.1L357.7 686.4L355.9 685.6L354.1 684.8L352.3 684.0L350.6 683.2L348.8 682.4L347.1 681.6L345.3 680.7L343.6 679.9L341.9 679.0L340.2 678.1L338.5 677.2L336.8 676.3L335.1 675.4L333.5 674.5L331.8 673.5L330.2 672.6L328.5 671.6L326.9 670.7L325.3 669.7L323.7 668.7L322.1 667.7L320.5 666.7L319.0 665.7L317.4 664.7L315.9 663.6L314.3 662.6L312.8 661.5L311.3 660.4L309.8 659.4L308.4 658.3L306.9 657.2L305.4 656.1L304.0 654.9L302.6 653.8L301.1 652.7L299.7 651.5L298.4 650.4L297.0 649.2L295.6 648.0L294.3 646.9L292.9 645.7L291.6 644.5L290.3 643.3L289.0 642.0L287.7 640.8L286.5 639.6L285.2 638.3L284.0 637.1L282.8 635.8L281.6 634.6L280.4 633.3L279.2 632.0L278.0 630.7L276.9 629.4L275.7 628.1L274.6 626.8L273.5 625.5L272.4 624.2L271.4 622.8L270.3 621.5L269.3 620.1L268.2 618.8L267.2 617.4L266.2 616.0L265.3 614.7L264.3 613.3L263.4 611.9L262.4 610.5L261.5 609.1L260.6 607.7L259.7 606.3L258.9 604.9L258.0 603.4L257.2 602.0L256.4 600.6L255.6 599.1L254.8 597.7L254.0 596.3L253.3 594.8L252.5 593.3L251.8 591.9L251.1 590.4L250.5 588.9L249.8 587.5L249.1 586.0L248.5 584.5L247.9 583.0L247.3 581.5L246.7 580.0L246.2 578.5L245.6 577.0L245.1 575.5L244.6 574.0L244.1 572.5L243.6 570.9L243.2 569.4L242.7 567.9L242.3 566.4L241.9 564.8L241.5 563.3L241.2 561.8L240.8 560.2L240.5 558.7L240.2 557.1L239.9 555.6L239.6 554.0L239.3 552.5L239.1 550.9L238.9 549.4L238.6 547.8L238.5 546.3L238.3 544.7L238.1 543.2L238.0 541.6L237.9 540.1L237.8 538.5L237.7 536.9L237.6 535.4L237.6 533.8L237.6 532.3L237.6 530.7L237.6 529.1L237.6 527.6L237.6 526.0L237.7 524.5L237.8 522.9L237.9 521.3L238.0 519.8L238.1 518.2L238.3 516.7L238.5 515.1L238.6 513.6L238.9 512.0L239.1 510.5L239.3 508.9L239.6 507.4L239.9 505.8L240.2 504.3L240.5 502.7L240.8 501.2L241.2 499.6L241.5 498.1L241.9 496.6L242.3 495.0L242.7 493.5L243.2 492.0L243.6 490.5L244.1 488.9L244.6 487.4L245.1 485.9L245.6 484.4L246.2 482.9L246.7 481.4L247.3 479.9L247.9 478.4L248.5 476.9L249.1 475.4L249.8 473.9L250.5 472.5L251.1 471.0L251.8 469.5L252.5 468.1L253.3 466.6L254.0 465.1L254.8 463.7L255.6 462.3L256.4 460.8L257.2 459.4L258.0 458.0L258.9 456.5L259.7 455.1L260.6 453.7L261.5 452.3L262.4 450.9L263.4 449.5L264.3 448.1L265.3 446.7L266.2 445.4L267.2 444.0L268.2 442.6L269.3 441.3L270.3 439.9L271.4 438.6L272.4 437.2L273.5 435.9L274.6 434.6L275.7 433.3L276.9 432.0L278.0 430.7L279.2 429.4L280.4 428.1L281.6 426.8L282.8 425.6L284.0 424.3L285.2 423.1L286.5 421.8L287.7 420.6L289.0 419.4L290.3 418.1L291.6 416.9L292.9 415.7L294.3 414.5L295.6 413.4L297.0 412.2L298.4 411.0L299.7 409.9L301.1 408.7L302.6 407.6L304.0 406.5L305.4 405.3L306.9 404.2L308.4 403.1L309.8 402.0L311.3 401.0L312.8 399.9L314.3 398.8L315.9 397.8L317.4 396.7L319.0 395.7L320.5 394.7L322.1 393.7L323.7 392.7L325.3 391.7L326.9 390.7L328.5 389.8L330.2 388.8L331.8 387.9L333.5 386.9L335.1 386.0L336.8 385.1L338.5 384.2L340.2 383.3L341.9 382.4L343.6 381.5L345.3 380.7L347.1 379.8L348.8 379.0L350.6 378.2L352.3 377.4L354.1 376.6L355.9 375.8L357.7 375.0L359.5 374.3L361.3 373.5L363.1 372.8L365.0 372.0L366.8 371.3L368.6 370.6L370.5 369.9L372.4 369.3L374.2 368.6L376.1 367.9L378.0 367.3L379.9 366.7L381.8 366.1L383.7 365.5L385.6 364.9L387.5 364.3L389.4 363.7L391.4 363.2L393.3 362.6L395.2 362.1L397.2 361.6L399.1 361.1L401.1 360.6L403.1 360.1L405.0 359.7L407.0 359.2L409.0 358.8L411.0 358.3L413.0 357.9L415.0 357.5L417.0 357.2L419.0 356.8L421.0 356.4L423.0 356.1L425.0 355.7L427.1 355.4L429.1 355.1L431.1 354.8L433.1 354.6L435.2 354.3L437.2 354.0L439.3 353.8L441.3 353.6L443.4 353.4L445.4 353.2L447.5 353.0L449.5 352.8L451.6 352.7L453.6 352.5L455.7 352.4L457.7 352.3L459.8 352.2L461.9 352.1L463.9 352.0L466.0 351.9L468.1 351.9L470.1 351.9L472.2 351.8Z"/>
<path d="M474.2 396.1L476.0 396.1L477.8 396.1L479.6 396.1L481.4 396.1L483.2 396.2L485.0 396.2L486.8 396.3L488.6 396.4L490.4 396.5L492.1 396.6L493.9 396.7L495.7 396.8L497.5 396.9L499.3 397.1L501.1 397.2L502.8 397.4L504.6 397.5L506.4 397.7L508.1 397.9L509.9 398.1L511.7 398.3L513.4 398.5L515.2 398.8L516.9 399.0L518.7 399.3L520.4 399.5L522.2 399.8L523.9 400.1L525.7 400.4L527.4 400.6L529.1 401.0L530.9 401.3L532.6 401.6L534.3 401.9L536.0 402.3L537.7 402.7L539.4 403.0L541.1 403.4L542.8 403.8L544.5 404.2L546.2 404.6L547.8 405.0L549.5 405.4L551.2 405.9L552.8 406.3L554.5 406.8L556.1 407.2L557.8 407.7L559.4 408.2L561.0 408.7L562.7 409.2L564.3 409.7L565.9 410.2L567.5 410.7L569.1 411.3L570.7 411.8L572.2 412.4L573.8 412.9L575.4 413.5L576.9 414.1L578.5 414.7L580.0 415.3L581.5 415.9L583.1 416.5L584.6 417.1L586.1 417.8L587.6 418.4L589.1 419.1L590.6 419.7L592.0 420.4L593.5 421.1L595.0 421.8L596.4 422.5L597.8 423.2L599.3 423.9L600.7 424.6L602.1 425.3L603.5 426.1L604.9 426.8L606.3 427.6L607.6 428.3L609.0 429.1L610.3 429.9L611.7 430.6L613.0 431.4L614.3 432.2L615.6 433.0L616.9 433.8L618.2 434.7L619.5 435.5L620.7 436.3L622.0 437.2L623.2 438.0L624.4 438.9L625.7 439.7L626.9 440.6L628.1 441.5L629.2 442.4L630.4 443.3L631.6 444.2L632.7 445.1L633.8 446.0L635.0 446.9L636.1 447.8L637.2 448.7L638.3 449.7L639.3 450.6L640.4 451.6L641.4 452.5L642.5 453.5L643.5 454.4L644.5 455.4L645.5 456.4L646.5 457.4L647.4 458.4L648.4 459.4L649.3 460.4L650.3 461.4L651.2 462.4L652.1 463.4L653.0 464.4L653.9 465.4L654.7 466.5L655.6 467.5L656.4 468.5L657.2 469.6L658.0 470.6L658.8 471.7L659.6 472.7L660.4 473.8L661.1 474.9L661.9 475.9L662.6 477.0L663.3 478.1L664.0 479.2L664.7 480.3L665.3 481.4L666.0 482.5L666.6 483.5L667.2 484.7L667.8 485.8L668.4 486.9L669.0 488.0L669.6 489.1L670.1 490.2L670.6 491.3L671.1 492.5L671.7 493.6L672.1 494.7L672.6 495.9L673.1 497.0L673.5 498.1L673.9 499.3L674.3 500.4L674.7 501.6L675.1 502.7L675.5 503.9L675.8 505.0L676.2 506.2L676.5 507.3L676.8 508.5L677.1 509.6L677.4 510.8L677.6 512.0L677.8 513.1L678.1 514.3L678.3 515.5L678.5 516.6L678.7 517.8L678.8 519.0L679.0 520.1L679.1 521.3L679.2 522.5L679.3 523.7L679.4 524.8L679.5 526.0L679.5 527.2L679.6 528.4L679.6 529.5L679.6 530.7L679.6 531.9L679.6 533.0L679.5 534.2L679.5 535.4L679.4 536.6L679.3 537.7L679.2 538.9L679.1 540.1L679.0 541.3L678.8 542.4L678.7 543.6L678.5 544.8L678.3 545.9L678.1 547.1L677.8 548.3L677.6 549.4L677.4 550.6L677.1 551.8L676.8 552.9L676.5 554.1L676.2 555.2L675.8 556.4L675.5 557.5L675.1 558.7L674.7 559.8L674.3 561.0L673.9 562.1L673.5 563.3L673.1 564.4L672.6 565.5L672.1 566.7L671.7 567.8L671.1 568.9L670.6 570.1L670.1 571.2L669.6 572.3L669.0 573.4L668.4 574.5L667.8 575.6L667.2 576.7L666.6 577.9L666.0 578.9L665.3 580.0L664.7 581.1L664.0 582.2L663.3 583.3L662.6 584.4L661.9 585.5L661.1 586.5L660.4 587.6L659.6 588.7L658.8 589.7L658.0 590.8L657.2 591.8L656.4 592.9L655.6 593.9L654.7 594.9L653.9 596.0L653.0 597.0L652.1 598.0L651.2 599.0L650.3 600.0L649.3 601.0L648.4 602.0L647.4 603.0L646.5 604.0L645.5 605.0L644.5 606.0L643.5 607.0L642.5 607.9L641.4 608.9L640.4 609.8L639.3 610.8L638.3 611.7L637.2 612.7L636.1 613.6L635.0 614.5L633.8 615.4L632.7 616.3L631.6 617.2L630.4 618.1L629.2 619.0L628.1 619.9L626.9 620.8L625.7 621.7L624.4 622.5L623.2 623.4L622.0 624.2L620.7 625.1L619.5 625.9L618.2 626.7L616.9 627.6L615.6 628.4L614.3 629.2L613.0 630.0L611.7 630.8L610.3 631.5L609.0 632.3L607.6 633.1L606.3 633.8L604.9 634.6L603.5 635.3L602.1 636.1L600.7 636.8L599.3 637.5L597.8 638.2L596.4 638.9L595.0 639.6L593.5 640.3L592.0 641.0L590.6 641.7L589.1 642.3L587.6 643.0L586.1 643.6L584.6 644.3L583.1 644.9L581.5 645.5L580.0 646.1L578.5 646.7L576.9 647.3L575.4 647.9L573.8 648.5L572.2 649.0L570.7 649.6L569.1 650.1L567.5 650.7L565.9 651.2L564.3 651.7L562.7 652.2L561.0 652.7L559.4 653.2L557.8 653.7L556.1 654.2L554.5 654.6L552.8 655.1L551.2 655.5L549.5 656.0L547.8 656.4L546.2 656.8L544.5 657.2L542.8 657.6L541.1 658.0L539.4 658.4L537.7 658.7L536.0 659.1L534.3 659.5L532.6 659.8L530.9 660.1L529.1 660.4L527.4 660.8L525.7 661.0L523.9 661.3L522.2 661.6L520.4 661.9L518.7 662.1L516.9 662.4L515.2 662.6L513.4 662.9L511.7 663.1L509.9 663.3L508.1 663.5L506.4 663.7L504.6 663.9L502.8 664.0L501.1 664.2L499.3 664.3L497.5 664.5L495.7 664.6L493.9 664.7L492.1 664.8L490.4 664.9L488.6 665.0L486.8 665.1L485.0 665.2L483.2 665.2L481.4 665.3L479.6 665.3L477.8 665.3L476.0 665.3L474.2 665.3L472.5 665.3L470.7 665.3L468.9 665.3L467.1 665.3L465.3 665.2L463.5 665.2L461.7 665.1L459.9 665.0L458.1 664.9L456.4 664.8L454.6 664.7L452.8 664.6L451.0 664.5L449.2 664.3L447.4 664.2L445.7 664.0L443.9 663.9L442.1 663.7L440.4 663.5L438.6 663.3L436.8 663.1L435.1 662.9L433.3 662.6L431.6 662.4L429.8 662.1L428.1 661.9L426.3 661.6L424.6 661.3L422.8 661.0L421.1 660.8L419.4 660.4L417.6 660.1L415.9 659.8L414.2 659.5L412.5 659.1L410.8 658.7L409.1 658.4L407.4 658.0L405.7 657.6L404.0 657.2L402.3 656.8L400.7 656.4L399.0 656.0L397.3 655.5L395.7 655.1L394.0 654.6L392.4 654.2L390.7 653.7L389.1 653.2L387.5 652.7L385.8 652.2L384.2 651.7L382.6 651.2L381.0 650.7L379.4 650.1L377.8 649.6L376.3 649.0L374.7 648.5L373.1 647.9L371.6 647.3L370.0 646.7L368.5 646.1L367.0 645.5L365.4 644.9L363.9 644.3L362.4 643.6L360.9 643.0L359.4 642.3L357.9 641.7L356.5 641.0L355.0 640.3L353.5 639.6L352.1 638.9L350.7 638.2L349.2 637.5L347.8 636.8L346.4 636.1L345.0 635.3L343.6 634.6L342.2 633.8L340.9 633.1L339.5 632.3L338.2 631.5L336.8 630.8L335.5 630.0L334.2 629.2L332.9 628.4L331.6 627.6L330.3 626.7L329.0 625.9L327.8 625.1L326.5 624.2L325.3 623.4L324.1 622.5L322.8 621.7L321.6 620.8L320.4 619.9L319.3 619.0L318.1 618.1L316.9 617.2L315.8 616.3L314.7 615.4L313.5 614.5L312.4 613.6L311.3 612.7L310.2 611.7L309.2 610.8L308.1 609.8L307.1 608.9L306.0 607.9L305.0 607.0L304.0 606.0L303.0 605.0L302.0 604.0L301.1 603.0L300.1 602.0L299.2 601.0L298.2 600.0L297.3 599.0L296.4 598.0L295.5 597.0L294.6 596.0L293.8 594.9L292.9 593.9L292.1 592.9L291.3 591.8L290.5 590.8L289.7 589.7L288.9 588.7L288.1 587.6L287.4 586.5L286.6 585.5L285.9 584.4L285.2 583.3L284.5 582.2L283.8 581.1L283.2 580.0L282.5 578.9L281.9 577.9L281.3 576.7L280.7 575.6L280.1 574.5L279.5 573.4L278.9 572.3L278.4 571.2L277.9 570.1L277.4 568.9L276.8 567.8L276.4 566.7L275.9 565.5L275.4 564.4L275.0 563.3L274.6 562.1L274.2 561.0L273.8 559.8L273.4 558.7L273.0 557.5L272.7 556.4L272.3 555.2L272.0 554.1L271.7 552.9L271.4 551.8L271.1 550.6L270.9 549.4L270.7 548.3L270.4 547.1L270.2 545.9L270.0 544.8L269.8 543.6L269.7 542.4L269.5 541.3L269.4 540.1L269.3 538.9L269.2 537.7L269.1 536.6L269.0 535.4L269.0 534.2L268.9 533.0L268.9 531.9L268.9 530.7L268.9 529.5L268.9 528.4L269.0 527.2L269.0 526.0L269.1 524.8L269.2 523.7L269.3 522.5L269.4 521.3L269.5 520.1L269.7 519.0L269.8 517.8L270.0 516.6L270.2 515.5L270.4 514.3L270.7 513.1L270.9 512.0L271.1 510.8L271.4 509.6L271.7 508.5L272.0 507.3L272.3 506.2L272.7 505.0L273.0 503.9L273.4 502.7L273.8 501.6L274.2 500.4L274.6 499.3L275.0 498.1L275.4 497.0L275.9 495.9L276.4 494.7L276.8 493.6L277.4 492.5L277.9 491.3L278.4 490.2L278.9 489.1L279.5 488.0L280.1 486.9L280.7 485.8L281.3 484.7L281.9 483.5L282.5 482.5L283.2 481.4L283.8 480.3L284.5 479.2L285.2 478.1L285.9 477.0L286.6 475.9L287.4 474.9L288.1 473.8L288.9 472.7L289.7 471.7L290.5 470.6L291.3 469.6L292.1 468.5L292.9 467.5L293.8 466.5L294.6 465.4L295.5 464.4L296.4 463.4L297.3 462.4L298.2 461.4L299.2 460.4L300.1 459.4L301.1 458.4L302.0 457.4L303.0 456.4L304.0 455.4L305.0 454.4L306.0 453.5L307.1 452.5L308.1 451.6L309.2 450.6L310.2 449.7L311.3 448.7L312.4 447.8L313.5 446.9L314.7 446.0L315.8 445.1L316.9 444.2L318.1 443.3L319.3 442.4L320.4 441.5L321.6 440.6L322.8 439.7L324.1 438.9L325.3 438.0L326.5 437.2L327.8 436.3L329.0 435.5L330.3 434.7L331.6 433.8L332.9 433.0L334.2 432.2L335.5 431.4L336.8 430.6L338.2 429.9L339.5 429.1L340.9 428.3L342.2 427.6L343.6 426.8L345.0 426.1L346.4 425.3L347.8 424.6L349.2 423.9L350.7 423.2L352.1 422.5L353.5 421.8L355.0 421.1L356.5 420.4L357.9 419.7L359.4 419.1L360.9 418.4L362.4 417.8L363.9 417.1L365.4 416.5L367.0 415.9L368.5 415.3L370.0 414.7L371.6 414.1L373.1 413.5L374.7 412.9L376.3 412.4L377.8 411.8L379.4 411.3L381.0 410.7L382.6 410.2L384.2 409.7L385.8 409.2L387.5 408.7L389.1 408.2L390.7 407.7L392.4 407.2L394.0 406.8L395.7 406.3L397.3 405.9L399.0 405.4L400.7 405.0L402.3 404.6L404.0 404.2L405.7 403.8L407.4 403.4L409.1 403.0L410.8 402.7L412.5 402.3L414.2 401.9L415.9 401.6L417.6 401.3L419.4 401.0L421.1 400.6L422.8 400.4L424.6 400.1L426.3 399.8L428.1 399.5L429.8 399.3L431.6 399.0L433.3 398.8L435.1 398.5L436.8 398.3L438.6 398.1L440.4 397.9L442.1 397.7L443.9 397.5L445.7 397.4L447.4 397.2L449.2 397.1L451.0 396.9L452.8 396.8L454.6 396.7L456.4 396.6L458.1 396.5L459.9 396.4L461.7 396.3L463.5 396.2L465.3 396.2L467.1 396.1L468.9 396.1L470.7 396.1L472.5 396.1Z"/></g>
<g stroke="#666" stroke-width="1" fill="none" id="ticks"><rect x="82.5" y="216.5" width="783" height="627"/><line x1="82" y1="530.5" x2="865" y2="530.5"/><line x1="474.5" y1="216" x2="474.5" y2="843"/><line x1="83" y1="812.5" x2="85" y2="812.5"/><line x1="865" y1="812.5" x2="863.5" y2="812.5"/><line x1="83" y1="781.5" x2="85" y2="781.5"/><line x1="865" y1="781.5" x2="863.5" y2="781.5"/><line x1="83" y1="749.5" x2="85" y2="749.5"/><line x1="865" y1="749.5" x2="863.5" y2="749.5"/><line x1="83" y1="718.5" x2="85" y2="718.5"/><line x1="865" y1="718.5" x2="863.5" y2="718.5"/><line x1="83" y1="687.5" x2="87" y2="687.5"/><line x1="865" y1="687.5" x2="862" y2="687.5"/><line x1="83" y1="655.5" x2="85" y2="655.5"/><line x1="865" y1="655.5" x2="863.5" y2="655.5"/><line x1="83" y1="624.5" x2="85" y2="624.5"/><line x1="865" y1="624.5" x2="863.5" y2="624.5"/><line x1="83" y1="593.5" x2="85" y2="593.5"/><line x1="865" y1="593.5" x2="863.5" y2="593.5"/><line x1="83" y1="561.5" x2="85" y2="561.5"/><line x1="865" y1="561.5" x2="863.5" y2="561.5"/><line x1="83" y1="530.5" x2="87" y2="530.5"/><line x1="865" y1="530.5" x2="862" y2="530.5"/><line x1="83" y1="499.5" x2="85" y2="499.5"/><line x1="865" y1="499.5" x2="863.5" y2="499.5"/><line x1="83" y1="467.5" x2="85" y2="467.5"/><line x1="865" y1="467.5" x2="863.5" y2="467.5"/><line x1="83" y1="436.5" x2="85" y2="436.5"/><line x1="865" y1="436.5" x2="863.5" y2="436.5"/><line x1="83" y1="405.5" x2="85" y2="405.5"/><line x1="865" y1="405.5" x2="863.5" y2="405.5"/><line x1="83" y1="373.5" x2="87" y2="373.5"/><line x1="865" y1="373.5" x2="862" y2="373.5"/><line x1="83" y1="342.5" x2="85" y2="342.5"/><line x1="865" y1="342.5" x2="863.5" y2="342.5"/><line x1="83" y1="311.5" x2="85" y2="311.5"/><line x1="865" y1="311.5" x2="863.5" y2="311.5"/><line x1="83" y1="279.5" x2="85" y2="279.5"/><line x1="865" y1="279.5" x2="863.5" y2="279.5"/><line x1="83" y1="248.5" x2="85" y2="248.5"/><line x1="865" y1="248.5" x2="863.5" y2="248.5"/><line x1="98.5" y1="217" x2="98.5" y2="219.5"/><line x1="98.5" y1="843" x2="98.5" y2="841"/><line x1="129.5" y1="217" x2="129.5" y2="219.5"/><line x1="129.5" y1="843" x2="129.5" y2="841"/><line x1="161.5" y1="217" x2="161.5" y2="221"/><line x1="161.5" y1="843" x2="161.5" y2="839.5"/><line x1="192.5" y1="217" x2="192.5" y2="219.5"/><line x1="192.5" y1="843" x2="192.5" y2="841"/><line x1="223.5" y1="217" x2="223.5" y2="219.5"/><line x1="223.5" y1="843" x2="223.5" y2="841"/><line x1="255.5" y1="217" x2="255.5" y2="219.5"/><line x1="255.5" y1="843" x2="255.5" y2="841"/><line x1="286.5" y1="217" x2="286.5" y2="219.5"/><line x1="286.5" y1="843" x2="286.5" y2="841"/><line x1="317.5" y1="217" x2="317.5" y2="221"/><line x1="317.5" y1="843" x2="317.5" y2="839.5"/><line x1="349.5" y1="217" x2="349.5" y2="219.5"/><line x1="349.5" y1="843" x2="349.5" y2="841"/><line x1="380.5" y1="217" x2="380.5" y2="219.5"/><line x1="380.5" y1="843" x2="380.5" y2="841"/><line x1="411.5" y1="217" x2="411.5" y2="219.5"/><line x1="411.5" y1="843" x2="411.5" y2="841"/><line x1="443.5" y1="217" x2="443.5" y2="219.5"/><line x1="443.5" y1="843" x2="443.5" y2="841"/><line x1="474.5" y1="217" x2="474.5" y2="221"/><line x1="474.5" y1="843" x2="474.5" y2="839.5"/><line x1="505.5" y1="217" x2="505.5" y2="219.5"/><line x1="505.5" y1="843" x2="505.5" y2="841"/><line x1="537.5" y1="217" x2="537.5" y2="219.5"/><line x1="537.5" y1="843" x2="537.5" y2="841"/><line x1="568.5" y1="217" x2="568.5" y2="219.5"/><line x1="568.5" y1="843" x2="568.5" y2="841"/><line x1="599.5" y1="217" x2="599.5" y2="219.5"/><line x1="599.5" y1="843" x2="599.5" y2="841"/><line x1="631.5" y1="217" x2="631.5" y2="221"/><line x1="631.5" y1="843" x2="631.5" y2="839.5"/><line x1="662.5" y1="217" x2="662.5" y2="219.5"/><line x1="662.5" y1="843" x2="662.5" y2="841"/><line x1="693.5" y1="217" x2="693.5" y2="219.5"/><line x1="693.5" y1="843" x2="693.5" y2="841"/><line x1="725.5" y1="217" x2="725.5" y2="219.5"/><line x1="725.5" y1="843" x2="725.5" y2="841"/><line x1="756.5" y1="217" x2="756.5" y2="219.5"/><line x1="756.5" y1="843" x2="756.5" y2="841"/><line x1="787.5" y1="217" x2="787.5" y2="221"/><line x1="787.5" y1="843" x2="787.5" y2="839.5"/><line x1="819.5" y1="217" x2="819.5" y2="219.5"/><line x1="819.5" y1="843" x2="819.5" y2="841"/><line x1="850.5" y1="217" x2="850.5" y2="219.5"/><line x1="850.5" y1="843" x2="850.5" y2="841"/></g>
<g stroke="#505050" stroke-width="1.05" fill="none"><path d="M73.00 214.60Q73.60 213.40 75.10 213.40Q77.30 213.40 77.30 215.00Q77.30 216.10 75.60 217.30L72.80 219.30H77.90"/><path d="M75.60 369.10V375.80M75.60 369.40L73.40 370.90"/><ellipse cx="75.60" cy="529.45" rx="2.05" ry="2.95"/><path d="M67.80 687.40H71.90"/><path d="M75.60 683.10V689.80M75.60 683.40L73.40 684.90"/><path d="M67.00 843.50H71.10"/><path d="M73.00 840.70Q73.60 839.50 75.10 839.50Q77.30 839.50 77.30 841.10Q77.30 842.20 75.60 843.40L72.80 845.40H77.90"/><path d="M155.84 853.50H159.94"/><path d="M161.84 850.70Q162.44 849.50 163.94 849.50Q166.14 849.50 166.14 851.10Q166.14 852.20 164.44 853.40L161.64 855.40H166.74"/><path d="M313.82 853.50H317.92"/><path d="M321.62 849.20V855.90M321.62 849.50L319.42 851.00"/><ellipse cx="474.75" cy="852.45" rx="2.05" ry="2.95"/><path d="M632.43 849.20V855.90M632.43 849.50L630.23 851.00"/><path d="M786.01 850.70Q786.61 849.50 788.11 849.50Q790.31 849.50 790.31 851.10Q790.31 852.20 788.61 853.40L785.81 855.40H790.91"/></g>
</svg>

<!-- status bar -->
<div class="a" style="left:1px;top:850px;width:1064px;height:17px;background:#f0f0f0"></div>
<div class="a" style="left:992px;top:850px;width:1px;height:17px;background:#d9d9d9"></div>
<div class="a" style="left:998px;top:852px;font-size:12px;letter-spacing:-0.5px;line-height:14px;color:#000">100%</div>
<svg class="a" style="left:1034px;top:853px" width="12" height="10"><polygon points="1.5,7 5.5,2.5 9.5,7" fill="#000"/></svg>
<svg class="a" style="left:1053px;top:855.5px" width="12" height="12" fill="#bcbcbc">
<rect x="7" y="1" width="2" height="2"/><rect x="4" y="4" width="2" height="2"/><rect x="7" y="4" width="2" height="2"/>
<rect x="1" y="7" width="2" height="2"/><rect x="4" y="7" width="2" height="2"/><rect x="7" y="7" width="2" height="2"/>
</svg>
</body></html>
